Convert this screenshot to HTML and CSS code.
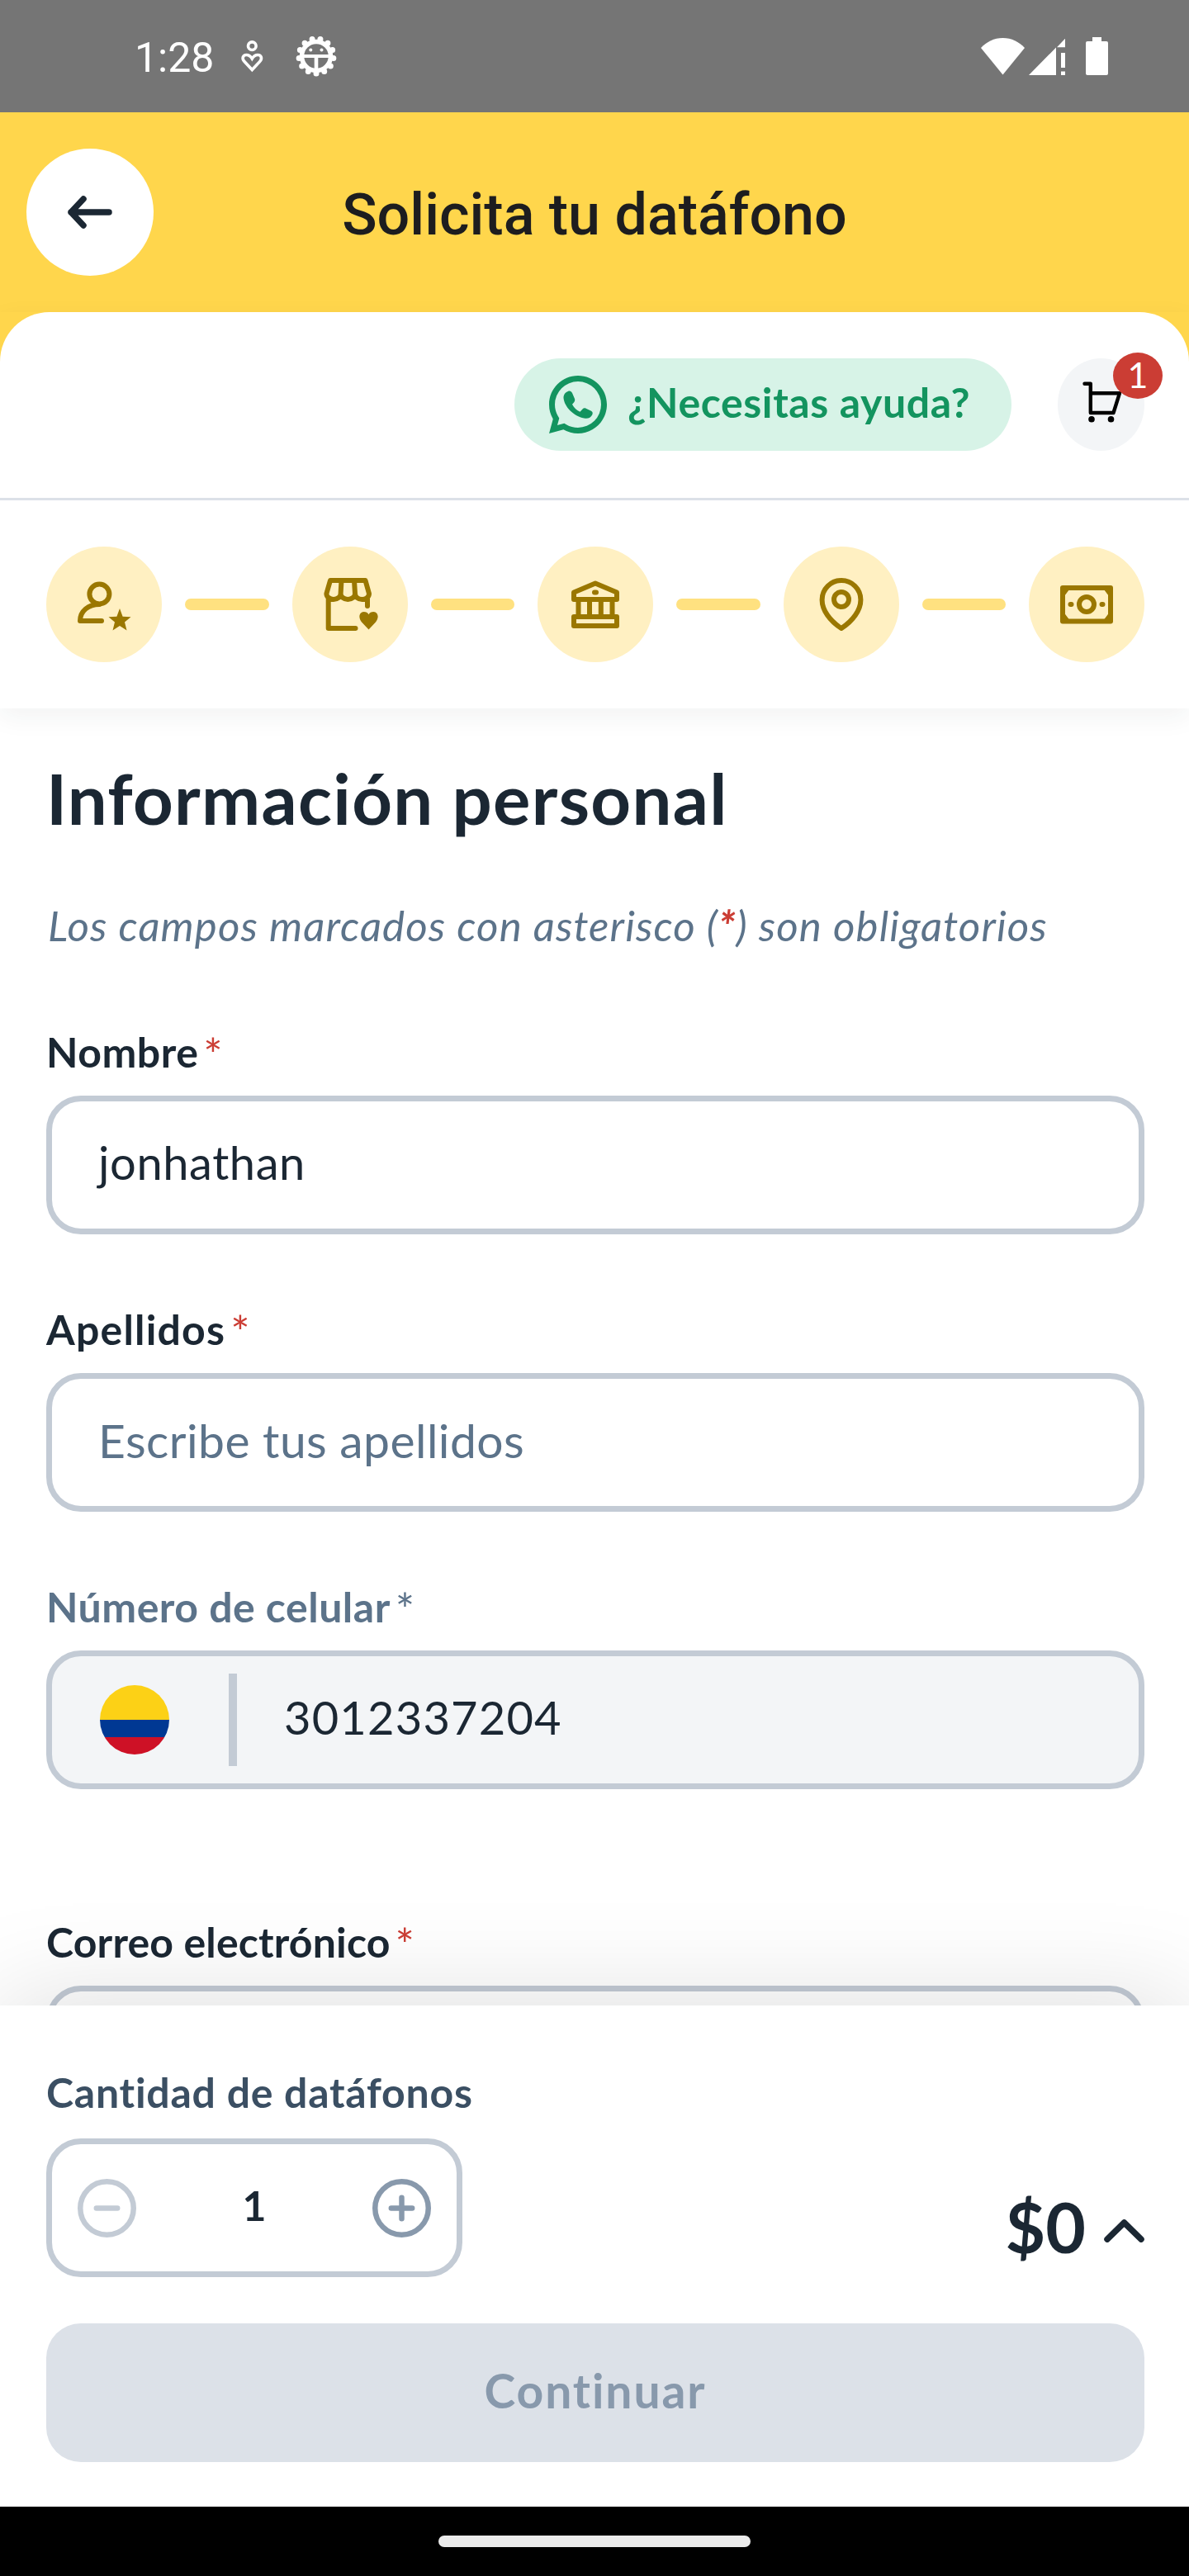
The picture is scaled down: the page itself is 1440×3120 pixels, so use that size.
FILE: index.html
```html
<!DOCTYPE html>
<html lang="es">
<head>
<meta charset="utf-8">
<title>Solicita tu datáfono</title>
<link rel="stylesheet" href="styles.css">
</head>
<body>
<div class="screen">
  <div class="status">
    <span class="status-time">1:28</span>
    <svg class="status-heart" width="30" height="44" viewBox="0 0 30 44" fill="none" stroke="#fff" stroke-width="3.6"><circle cx="15.3" cy="9.7" r="4.8"/><path d="M15.3 38.5L6 28.6C2.5 24.8 4.2 20.5 8.5 20.5c3 0 5.300 2.200 6.800 4.600c1.500-2.400 3.800-4.600 6.800-4.600c4.300 0 6 4.300 2.500 8.100z"/></svg>
    <svg width="52" height="52" viewBox="0 0 52 52" fill="none" stroke="#fff"><circle cx="26" cy="26" r="17.500" stroke-width="5.500"/><circle cx="26" cy="26" r="21" stroke-width="7" stroke-linecap="round" pathLength="13" stroke-dasharray="0 1" transform="rotate(90 26 26)"/><path d="M10 26H42" stroke-width="4"/><path d="M26 26V43" stroke-width="4.600"/><g fill="#fff" stroke="none"><circle cx="19.300" cy="18.500" r="2"/><circle cx="32.500" cy="18.500" r="2"/></g></svg>
    <div class="status-right">
      <svg width="53" height="45" viewBox="0 0 53 45" fill="#fff"><path d="M0 12C7 4.500 16 0 26.500 0S46 4.500 53 12L26.500 44.500z"/></svg>
      <svg width="44" height="45" viewBox="0 0 44 45" fill="#fff"><path d="M0 45L33 11.500V45zM34 11.200L44 .8V11.200zM39 18H44V36H39zM39 40.500H44V45H39z"/></svg>
      <svg class="battery" width="27" height="46" viewBox="0 0 27 46" fill="#fff"><path d="M8 0H19V5H25a2 2 0 0 1 2 2V44a2 2 0 0 1-2 2H2a2 2 0 0 1-2-2V7a2 2 0 0 1 2-2H8z"/></svg>
    </div>
  </div>

  <header class="titlebar">
    <div class="back"><svg width="56" height="42" viewBox="0 0 56 42" fill="none" stroke="#1b2733" stroke-width="7.500" stroke-linecap="round" stroke-linejoin="round"><path d="M51 21H5M20 5L5 21L20 37"/></svg></div>
    <h1>Solicita tu datáfono</h1>
  </header>

  <div class="top">
    <div class="sheet">
      <div class="toolbar">
        <div class="help">
          <svg width="70" height="70" viewBox="0 0 70 70" fill="#13945f"><path transform="translate(-7 -7) scale(3.500)" d="M7.253 18.494l.724.423A7.953 7.953 0 0 0 12 20a8 8 0 1 0-8-8c0 1.436.377 2.813 1.084 4.024l.422.724-.653 2.401 2.400-.655zM2.004 22l1.352-4.968A9.954 9.954 0 0 1 2 12C2 6.477 6.477 2 12 2s10 4.477 10 10-4.477 10-10 10a9.954 9.954 0 0 1-5.030-1.355L2.004 22z"/><path d="M23 19c2-1 4 0 5 2l3 7c.600 1.500 0 3-1 4.500l-2 2.200c2.300 4.600 5.500 7.300 9.500 9l3-3.300c1-1 2.700-1.400 4.200-.6l6.300 3c2 1 2 3 1.300 4.500c-2 4.300-6 5.200-10 4.200C30 49 18.500 38 17.500 27c-.2-3.500 2-7 5.500-8z"/></svg>
          <span>¿Necesitas ayuda?</span>
        </div>
        <div class="cart">
          <svg width="48" height="52" viewBox="0 0 48 52" fill="none" stroke="#000" stroke-width="4.400" stroke-linecap="round" stroke-linejoin="round"><path d="M2.500 4.800H9.800V40H37.500L45 16.200H9.800"/><g fill="#000" stroke="none"><circle cx="11" cy="47.800" r="3.800"/><circle cx="34.500" cy="47.800" r="3.800"/></g></svg>
          <span class="badge">1</span>
        </div>
      </div>
      <div class="steps">
        <div class="step"><svg viewBox="0 0 70 70"><circle cx="29.400" cy="22.500" r="12"/><path d="M32 55H6C6 43 16 35 29.400 35"/><path class="solid" d="M54 40L57.600 49.700L67.500 50.200L60 56.500L62.500 66.500L54 61L45.500 66.500L48 56.500L40.500 50.200L50.400 49.700z"/></svg></div>
        <div class="line"></div>
        <div class="step"><svg viewBox="0 0 70 70"><path d="M11 6H53.500L58 22a8.500 7 0 0 1-17 0a8.700 7 0 0 1-17.400 0a8.600 7 0 0 1-17.200 0zM24.500 6L23.600 22M40 6L41 22M8.700 28V64H41.500M56 28V37"/><path class="solid" d="M57.500 65.500L49 56.500C44.500 51 46 44.500 51.500 44c3 0 4.800 1.200 6 3.200c1.200-2 3-3.200 6-3.200c5.500 .5 7 7 2.500 12.500z"/></svg></div>
        <div class="line"></div>
        <div class="step"><svg viewBox="0 0 70 70"><path d="M9 29V20.500L35 9.500L61 20.500V29zM34 20.500H36M14.500 30V48M28 30V48M41.800 30V48M55.500 30V48M9 50H61V61H9z"/></svg></div>
        <div class="line"></div>
        <div class="step"><svg viewBox="0 0 70 70"><path d="M35 64C21 55 11.600 42 11.600 29.500a23.400 23.400 0 0 1 46.800 0C58.400 42 49 55 35 64z"/><circle cx="35" cy="29" r="9"/></svg></div>
        <div class="line"></div>
        <div class="step"><svg viewBox="0 0 70 70"><path d="M6 15H64V55.500H6zM15.500 35H16.500M53.500 35H54.500"/><circle cx="35" cy="35" r="9"/><path class="solid" d="M6 15H15.500L8 25zM64 15H54.500L62 25zM6 55.500H15.500L8 45.500zM64 55.500H54.500L62 45.500z"/></svg></div>
      </div>
    </div>
  </div>

  <main class="form">
    <h2>Información personal</h2>
    <p class="note">Los campos marcados con asterisco (<b>*</b>) son obligatorios</p>
    <div class="field">
      <label>Nombre<i>*</i></label>
      <div class="input name">jonhathan</div>
    </div>
    <div class="field">
      <label class="wide">Apellidos<i>*</i></label>
      <div class="input placeholder">Escribe tus apellidos</div>
    </div>
    <div class="field disabled">
      <label>Número de celular<i>*</i></label>
      <div class="input phone"><span class="flag"></span><span class="separator"></span><span class="number">3012337204</span></div>
    </div>
    <div class="field email">
      <label class="tight">Correo electrónico<i>*</i></label>
      <div class="input"></div>
    </div>
  </main>

  <footer class="panel">
    <div class="summary">
      <div class="quantity">
        <div class="quantity-label">Cantidad de datáfonos</div>
        <div class="stepper">
          <svg class="minus" viewBox="0 0 70 70"><circle cx="35" cy="35" r="31.800"/><path d="M22.500 35H47.500"/></svg>
          <span>1</span>
          <svg class="plus" viewBox="0 0 70 70"><circle cx="35" cy="35" r="31.800"/><path d="M22.500 35H47.500M35 22.500V47.500"/></svg>
        </div>
      </div>
      <div class="price">
        <span>$0</span>
        <svg width="49" height="28" viewBox="0 0 49 28" fill="none" stroke="#1b2733" stroke-width="7.500" stroke-linecap="round" stroke-linejoin="round"><path d="M4 24.200L24.500 4L45 24.200"/></svg>
      </div>
    </div>
    <div class="continue">Continuar</div>
  </footer>
  <div class="nav"><div class="handle"></div></div>
</div>
</body>
</html>
```
FILE: styles.css
```css
* { box-sizing: border-box; }
body { margin: 0; font-family: Lato, "Open Sans", sans-serif; color: #1b2733; background: #fff; }
svg { display: block; flex: none; }
h1, h2, p { margin: 0; }

.screen { width: 1440px; height: 3120px; display: flex; flex-direction: column; overflow: hidden; }

.status { height: 136px; flex: none; display: flex; align-items: center; padding: 0 98px 0 163px; background: #757575; color: #fff; }
.status-time { width: 127px; padding-top: 4px; font: 400 50px/60px Roboto, sans-serif; }
.status-heart { margin-right: 37px; }
.status-right { margin-left: auto; display: flex; align-items: center; gap: 5px; }
.battery { margin-left: 20px; }

.titlebar { height: 242px; flex: none; display: grid; grid-template-columns: 154px 1fr 154px; align-items: center; padding: 0 32px; background: #ffd64c; }
.back { width: 154px; height: 154px; border-radius: 50%; background: #fff; display: flex; align-items: center; justify-content: center; }
.titlebar h1 { padding-top: 6px; font: 500 70px/84px Roboto, sans-serif; color: #1d1d1f; text-align: center; }

.top { flex: none; position: relative; z-index: 1; background: #ffd64c; box-shadow: 0 10px 30px rgba(27, 51, 48, .06); }
.sheet { height: 480px; background: #fff; border-radius: 60px 60px 0 0; }
.toolbar { height: 228px; display: flex; justify-content: flex-end; gap: 56px; padding: 56px 54px 0 0; border-bottom: 3px solid #dce1e8; }
.help { width: 602px; height: 112px; display: flex; align-items: center; gap: 25px; padding-left: 42px; border-radius: 56px; background: #d7f3e7; }
.help span { padding-bottom: 7px; font-size: 50px; line-height: 60px; font-weight: 700; letter-spacing: .6px; color: #13945f; }
.cart { position: relative; width: 105px; height: 112px; padding: 26px 0 0 30px; border-radius: 50%; background: #f3f5f7; }
.badge { position: absolute; left: 67px; top: -7px; width: 60px; height: 56px; border-radius: 30px / 28px; background: #cb3d34; color: #fff; font-size: 43px; line-height: 53px; text-align: center; }

.steps { display: flex; align-items: center; gap: 28px; padding: 56px 54px 0 56px; }
.step { width: 140px; height: 140px; flex: none; display: flex; align-items: center; justify-content: center; border-radius: 50%; background: #fff0c2; }
.step svg { width: 70px; height: 70px; fill: none; stroke: #9a7700; stroke-width: 6px; stroke-linecap: round; stroke-linejoin: round; }
.step .solid { fill: #9a7700; stroke: none; }
.line { flex: 1; height: 14px; border-radius: 7px; background: #ffe180; }

.form { flex: 1; min-height: 0; overflow: hidden; padding: 52px 54px 0 56px; background: #fff; }
.form h2 { font-size: 85px; line-height: 112px; font-weight: 700; letter-spacing: 1.3px; }
.note { margin: 66px 0 87px 2px; font-size: 51px; line-height: 66px; font-style: italic; letter-spacing: 1.1px; color: #5c738a; white-space: nowrap; }
.note b { font-weight: 900; color: #cb3d34; }
.field { margin-bottom: 82px; }
label { display: flex; gap: 6px; height: 66px; font-size: 50px; line-height: 67px; font-weight: 700; letter-spacing: .5px; }
label i { font-style: normal; font-size: 55px; line-height: 70px; font-weight: 400; color: #cb3d34; }
.wide { letter-spacing: 1.2px; }
.tight { letter-spacing: .15px; }
.input { height: 168px; margin-top: 20px; padding: 0 56px 6px; display: flex; align-items: center; border: 7px solid #c3cbd5; border-radius: 42px; font-size: 56px; line-height: 70px; }
.name { letter-spacing: .6px; }
.placeholder { font-size: 57px; letter-spacing: .45px; color: #5c738a; }
.disabled label, .disabled i { color: #5c738a; }
.phone { padding: 0 58px; background: #f3f5f7; }
.flag { width: 84px; height: 84px; border-radius: 50%; background: linear-gradient(#fcd116 50%, #003893 50% 75%, #ce1126 75%); }
.separator { width: 10px; height: 112px; margin: 0 57px 0 72px; background: #c3cbd5; }
.number { padding-bottom: 6px; letter-spacing: 1.2px; }
.email { margin-top: 152px; }

.panel { flex: none; position: relative; z-index: 1; padding: 72px 54px 54px 56px; background: #fff; box-shadow: 0 -6px 120px rgba(0, 0, 0, .13); }
.summary { display: flex; justify-content: space-between; align-items: flex-end; }
.quantity-label { font-size: 50px; line-height: 67px; font-weight: 700; letter-spacing: .75px; color: #3b4f63; }
.stepper { width: 504px; height: 168px; margin-top: 22px; padding: 0 31px; display: flex; align-items: center; justify-content: space-between; border: 7px solid #c3cbd5; border-radius: 42px; }
.stepper span { padding-bottom: 7px; font-size: 50px; line-height: 60px; font-weight: 700; }
.stepper svg { width: 71px; height: 71px; fill: none; stroke-width: 6.400px; stroke-linecap: round; }
.minus { stroke: #c3cbd5; }
.plus { stroke: #8899ac; }
.price { display: flex; align-items: center; gap: 22px; margin-bottom: 5px; font-size: 84px; line-height: 112px; font-weight: 700; }
.price svg { margin-top: 10px; }
.continue { height: 168px; margin-top: 56px; padding-bottom: 7px; display: flex; align-items: center; justify-content: center; border-radius: 42px; background: #dce1e8; color: #8899ac; font-size: 57px; font-weight: 700; letter-spacing: 1.900px; }

.nav { height: 84px; flex: none; position: relative; z-index: 2; display: flex; align-items: center; justify-content: center; background: #000; }
.handle { width: 378px; height: 14px; border-radius: 7px; background: #ebebeb; }
```
